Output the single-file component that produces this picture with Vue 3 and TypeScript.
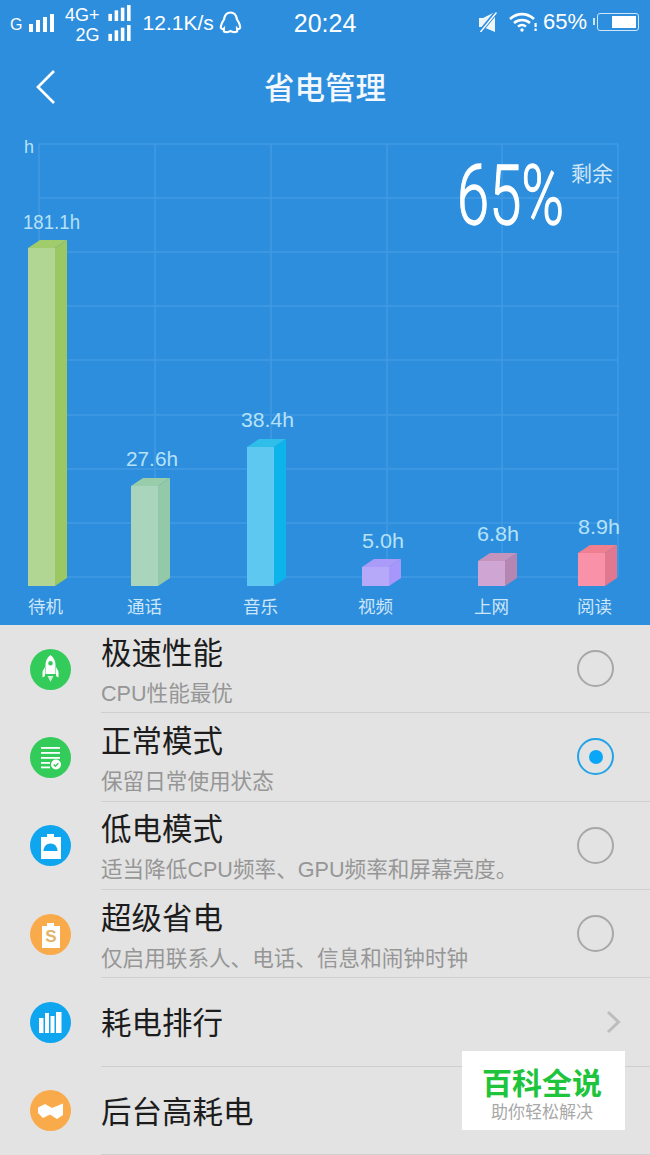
<template>
  <div class="screen">
    <svg width="0" height="0" class="defs">
      <symbol id="signal" viewBox="0 0 25 18">
        <rect x="0" y="10" width="4" height="8" />
        <rect x="7" y="6" width="4" height="12" />
        <rect x="14" y="3" width="4" height="15" />
        <rect x="21" y="0" width="4" height="18" />
      </symbol>
    </svg>

    <div class="top">
      <div class="status">
        <span class="net-g">G</span>
        <svg class="sig sig-big"><use href="#signal" /></svg>
        <div class="net-dual">
          <div class="net-line"><span>4G+</span><svg class="sig sig-small"><use href="#signal" /></svg></div>
          <div class="net-line"><span>2G</span><svg class="sig sig-small"><use href="#signal" /></svg></div>
        </div>
        <span class="speed">12.1K/s</span>
        <svg class="qq" width="23" height="23" viewBox="0 0 23 23" fill="none" stroke="#fff" stroke-width="2.200">
          <path d="M11.500 1.500C7 1.500 5.500 5 5 8.500 3 11.500 1.500 15 2 17c.5 1.500 2.500 1 3 .5 0 1.500-1 3.500 1.500 3.500 2 .5 3.500-.5 5-1 1.500.5 3 1.500 5 1 2.500 0 1.500-2 1.500-3.500.5.5 2.500 1 3-.5.5-2-1-5.500-3-8.500C17.500 5 16 1.500 11.500 1.500z" />
        </svg>
        <span class="clock">20:24</span>

        <div class="status-right">
          <svg class="mute" width="18" height="20" viewBox="0 0 18 20">
            <path d="M0 6h4l12-6v20L4 15H0z" fill="#eef6fc" />
            <path d="M1 20L17.500 0" stroke="#2d8edd" stroke-width="4" />
            <path d="M1.500 20L17.500 .5" stroke="#fff" stroke-width="1.400" />
          </svg>
          <svg class="wifi" width="28" height="20" viewBox="0 0 28 20" fill="none" stroke="#fff" stroke-width="2.600">
            <path d="M1 7c7-6.500 17-6.500 24 0" />
            <path d="M5 11c4.700-4 11.300-4 16 0" />
            <path d="M9 14.600c2.500-2 5.500-2 8 0" />
            <circle cx="13" cy="18" r="1.700" fill="#fff" stroke="none" />
            <rect x="25.500" y="11" width="2.200" height="4" fill="#fff" stroke="none" />
            <rect x="25.500" y="16.500" width="2.200" height="2.500" fill="#fff" stroke="none" />
          </svg>
          <span class="percent">65%</span>
          <div class="battery">
            <div class="battery-fill"></div>
          </div>
        </div>
      </div>

      <div class="header">
        <svg class="back" width="22" height="36" viewBox="0 0 22 36" fill="none" stroke="#fff" stroke-width="2.700">
          <path d="M19 2L3 18l16 16" />
        </svg>
        <h1 class="title">省电管理</h1>
      </div>

      <svg class="chart" width="650" height="499" viewBox="0 126 650 499">
        <line v-for="y in gridY" :key="'h' + y" x1="39" x2="618" :y1="y" :y2="y" class="grid-line" />
        <line v-for="x in gridX" :key="'v' + x" :x1="x" :x2="x" y1="144" y2="577" class="grid-line" />

        <text x="24" y="153" class="unit">h</text>

        <g v-for="bar in bars" :key="bar.label">
          <polygon :points="`${bar.x},${bar.top} ${bar.x + 12},${bar.top - 8} ${bar.x + 39},${bar.top - 8} ${bar.x + 27},${bar.top}`" :fill="bar.cap" />
          <polygon :points="`${bar.x + 27},${bar.top} ${bar.x + 39},${bar.top - 8} ${bar.x + 39},578 ${bar.x + 27},586`" :fill="bar.side" />
          <rect :x="bar.x" :y="bar.top" width="27" :height="586 - bar.top" :fill="bar.front" />
          <text :x="bar.valueX" :y="bar.valueY" :textLength="bar.valueW" lengthAdjust="spacingAndGlyphs" class="value">{{ bar.value }}</text>
          <text :x="bar.labelX" y="613" class="label">{{ bar.label }}</text>
        </g>

        <text transform="translate(457 224) scale(.69 1)" class="big">65%</text>
        <text x="571" y="181" class="left">剩余</text>
      </svg>
    </div>

    <div class="list">
      <div v-for="row in rows" :key="row.title" class="row">
        <svg class="icon" width="41" height="41" viewBox="0 0 41 41">
          <circle cx="20.500" cy="20.500" r="20.500" :fill="row.color" />
          <g v-if="row.icon === 'rocket'" fill="#fff">
            <path fill-rule="evenodd" d="M20.500 6c3.300 2.500 5 6 5 10v9h-10v-9c0-4 1.700-7.500 5-10zm0 6a2.300 2.300 0 100 4.600 2.300 2.300 0 000-4.600z" />
            <path d="M15 18v9l-2.500 1.500v-6zM26 18v9l2.500 1.500v-6z" />
            <path d="M17.500 27h6l-3 6z" opacity=".75" />
          </g>
          <g v-else-if="row.icon === 'doc'" fill="#fff">
            <rect x="11" y="10" width="19" height="1.800" />
            <rect x="11" y="15" width="19" height="1.800" />
            <rect x="11" y="20" width="19" height="1.800" />
            <rect x="11" y="25" width="9" height="1.800" />
            <rect x="11" y="29.500" width="9" height="1.800" />
            <circle cx="26" cy="27.500" r="5" />
            <path d="M23.700 27.500l1.700 1.700 3-3" fill="none" :stroke="row.color" stroke-width="1.400" />
          </g>
          <g v-else-if="row.icon === 'android'">
            <path d="M11 12h6V9h7v3h7v22H11z" fill="#fff" />
            <path d="M13.500 26c0-4.500 3-7.500 7-7.500s7 3 7 7.500z" :fill="row.color" />
          </g>
          <g v-else-if="row.icon === 'shop'">
            <path d="M12 12h5V9h7v3h6v22H12z" fill="#fff" />
            <text x="21" y="28" class="s-mark">S</text>
          </g>
          <g v-else-if="row.icon === 'bars'" fill="#fff">
            <rect x="9" y="16" width="4.500" height="15" />
            <rect x="15" y="11" width="4" height="20" />
            <rect x="20.500" y="14" width="4" height="17" />
            <rect x="26" y="10" width="5.500" height="21" />
          </g>
          <path v-else d="M8 17.500l7-3.500 7 4 11-4.500V25l-6 4-7-4.500-7 3.500-5-5z" fill="#fff" />
        </svg>

        <div class="row-main">
          <div class="row-text">
            <div class="row-title">{{ row.title }}</div>
            <div v-if="row.sub" class="row-sub">{{ row.sub }}</div>
          </div>
          <div v-if="row.kind === 'radio'" class="radio" :class="{ checked: row.checked }">
            <span v-if="row.checked" class="radio-dot"></span>
          </div>
          <svg v-else-if="row.kind === 'arrow'" class="chevron" width="15" height="24" viewBox="0 0 15 24" fill="none" stroke="#bdbdbd" stroke-width="3">
            <path d="M2 2l10.500 10L2 22" />
          </svg>
        </div>
      </div>

      <div class="badge">
        <div class="badge-title">百科全说</div>
        <div class="badge-sub">助你轻松解决</div>
      </div>
    </div>
  </div>
</template>

<script setup lang="ts">
interface Bar {
  label: string
  value: string
  x: number
  top: number
  valueX: number
  valueY: number
  valueW: number
  labelX: number
  front: string
  side: string
  cap: string
}

interface Row {
  title: string
  sub?: string
  icon: string
  color: string
  kind: 'radio' | 'arrow' | 'none'
  checked?: boolean
}

const gridY = [144, 198, 252, 306, 360, 415, 469, 523, 577]
const gridX = [39, 155, 271, 387, 502, 618]

const bars: Bar[] = [
  { label: '待机', value: '181.1h', x: 28, top: 248, valueX: 23, valueY: 229, valueW: 57, labelX: 28, front: '#b1d592', side: '#9bc863', cap: '#a0cc6c' },
  { label: '通话', value: '27.6h', x: 131, top: 486, valueX: 126, valueY: 466, valueW: 52, labelX: 127, front: '#a9d5bd', side: '#93c9a8', cap: '#99cdaa' },
  { label: '音乐', value: '38.4h', x: 247, top: 447, valueX: 241, valueY: 427, valueW: 53, labelX: 243, front: '#5ec8f0', side: '#0db4ea', cap: '#2fbdea' },
  { label: '视频', value: '5.0h', x: 362, top: 567, valueX: 362, valueY: 548, valueW: 42, labelX: 358, front: '#b6a9fa', side: '#a897fb', cap: '#ab9bf8' },
  { label: '上网', value: '6.8h', x: 478, top: 561, valueX: 477, valueY: 541, valueW: 42, labelX: 474, front: '#cfa5d3', side: '#b686b3', cap: '#c594bd' },
  { label: '阅读', value: '8.9h', x: 578, top: 553, valueX: 578, valueY: 534, valueW: 42, labelX: 577, front: '#f992a8', side: '#e0788f', cap: '#ef808f' }
]

const rows: Row[] = [
  { title: '极速性能', sub: 'CPU性能最优', icon: 'rocket', color: '#33cc5b', kind: 'radio' },
  { title: '正常模式', sub: '保留日常使用状态', icon: 'doc', color: '#33cc5b', kind: 'radio', checked: true },
  { title: '低电模式', sub: '适当降低CPU频率、GPU频率和屏幕亮度。', icon: 'android', color: '#10a5ef', kind: 'radio' },
  { title: '超级省电', sub: '仅启用联系人、电话、信息和闹钟时钟', icon: 'shop', color: '#f9ab4b', kind: 'radio' },
  { title: '耗电排行', icon: 'bars', color: '#10a5ef', kind: 'arrow' },
  { title: '后台高耗电', icon: 'wave', color: '#f9ab4b', kind: 'none' }
]
</script>

<style>
html,
body {
  margin: 0;
  background: #e3e3e3;
}
</style>

<style scoped>
.screen {
  position: relative;
  width: 650px;
  height: 1155px;
  overflow: hidden;
  background: #e3e3e3;
  font-family: "Liberation Sans", "Noto Sans CJK SC", sans-serif;
}

.defs {
  position: absolute;
}

.top {
  background: #2d8edd;
  height: 625px;
}

.status {
  display: flex;
  align-items: center;
  height: 48px;
  padding: 0 11px 0 10px;
  color: #fff;
}

.net-g {
  font-size: 16px;
  width: 19px;
  padding-top: 2px;
}

.sig {
  fill: #fff;
}

.sig-big {
  width: 25px;
  height: 18px;
  margin-bottom: 3px;
}

.sig-small {
  width: 25px;
  height: 16px;
}

.net-dual {
  margin-left: 11px;
  padding-bottom: 3px;
  font-size: 18px;
  line-height: 20px;
}

.net-line {
  display: flex;
  justify-content: flex-end;
  align-items: center;
  gap: 7px;
  height: 20px;
}

.net-line span {
  padding-top: 5px;
}

.speed {
  margin-left: 11px;
  padding-bottom: 2px;
  font-size: 21px;
}

.qq {
  margin-left: 5px;
  margin-bottom: 3px;
}

.clock {
  margin-left: 52px;
  padding-bottom: 2px;
  font-size: 25px;
}

.status-right {
  display: flex;
  align-items: center;
  margin-left: auto;
  padding-bottom: 4px;
}

.wifi {
  margin-left: 12px;
}

.percent {
  margin-left: 6px;
  font-size: 22px;
}

.battery {
  position: relative;
  box-sizing: border-box;
  width: 42px;
  height: 18px;
  margin-left: 10px;
  padding: 2px;
  display: flex;
  justify-content: flex-end;
  border: 1.500px solid #cfe6f8;
  border-radius: 3px;
}

.battery::before {
  content: '';
  position: absolute;
  left: -5px;
  top: 4px;
  width: 2px;
  height: 7px;
  background: #cfe6f8;
}

.battery-fill {
  width: 24px;
  background: #fff;
}

.header {
  display: grid;
  grid-template-columns: 1fr auto 1fr;
  align-items: center;
  height: 78px;
}

.back {
  margin-left: 35px;
}

.title {
  margin: 0 0 2px;
  color: #f2f8fd;
  font-size: 30.500px;
  font-weight: 500;
}

.chart {
  display: block;
}

.grid-line {
  stroke: #419ae2;
  stroke-width: 1.500;
}

.unit,
.value,
.label,
.left {
  fill: #b5e2f8;
}

.unit {
  font-size: 18px;
}

.value {
  font-size: 20px;
}

.label {
  font-size: 17.500px;
  fill: #cde6f8;
}

.big {
  font-family: Roboto, sans-serif;
  font-size: 84px;
  font-weight: 300;
  fill: #fff;
  stroke: #fff;
  stroke-width: 1.300;
}

.left {
  font-size: 21px;
  fill: #d0e7f8;
}

.list {
  height: 530px;
}

.row {
  display: flex;
  align-items: center;
  height: 88.330px;
  padding-left: 30px;
}

.icon {
  flex-shrink: 0;
  margin-right: 30px;
}

.s-mark {
  font-size: 17px;
  font-weight: 700;
  fill: #e3b265;
  text-anchor: middle;
}

.row-main {
  flex: 1;
  box-sizing: border-box;
  height: 100%;
  display: flex;
  align-items: center;
  justify-content: space-between;
  padding-right: 36px;
  border-bottom: 1.500px solid #cfcfcf;
}

.row-text {
  padding-top: 3px;
}

.row-title {
  color: #1c1c1c;
  font-size: 30.500px;
  line-height: 40px;
}

.row-sub {
  margin-top: 7px;
  color: #969696;
  font-size: 21.600px;
  line-height: 28px;
}

.radio {
  box-sizing: border-box;
  width: 37px;
  height: 37px;
  display: flex;
  align-items: center;
  justify-content: center;
  border: 2px solid #a8a8a8;
  border-radius: 50%;
}

.radio.checked {
  border-color: #22a4e6;
}

.radio-dot {
  width: 14px;
  height: 14px;
  border-radius: 50%;
  background: #0aa6f8;
}

.chevron {
  margin-right: -7px;
}

.badge {
  position: absolute;
  left: 462px;
  top: 1051px;
  box-sizing: border-box;
  width: 163px;
  height: 79px;
  padding-right: 3px;
  background: #fff;
  text-align: center;
}

.badge-title {
  margin-top: 15px;
  color: #1dc43c;
  font-size: 30px;
  font-weight: 700;
  line-height: 36px;
}

.badge-sub {
  color: #a8a8a8;
  font-size: 17px;
  line-height: 22px;
}
</style>
